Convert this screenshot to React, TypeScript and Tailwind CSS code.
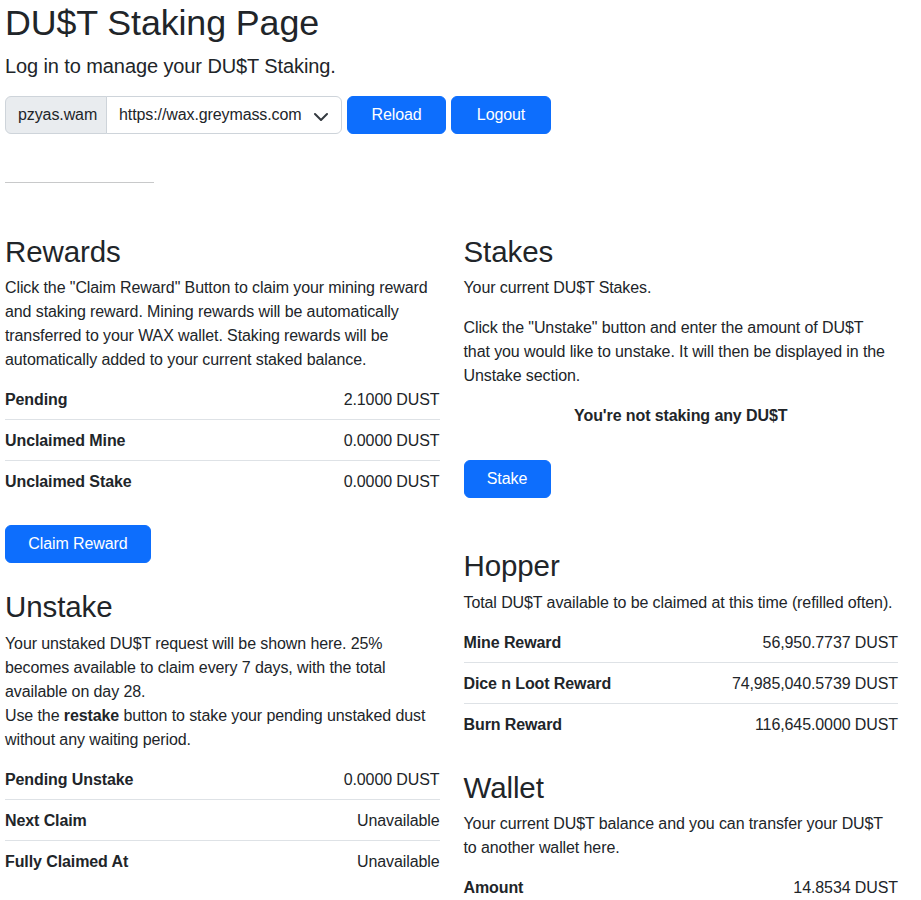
import React from 'react';

type Row = { label: string; value: string };

const REWARD_ROWS: Row[] = [
  { label: 'Pending', value: '2.1000 DUST' },
  { label: 'Unclaimed Mine', value: '0.0000 DUST' },
  { label: 'Unclaimed Stake', value: '0.0000 DUST' },
];

const UNSTAKE_ROWS: Row[] = [
  { label: 'Pending Unstake', value: '0.0000 DUST' },
  { label: 'Next Claim', value: 'Unavailable' },
  { label: 'Fully Claimed At', value: 'Unavailable' },
];

const HOPPER_ROWS: Row[] = [
  { label: 'Mine Reward', value: '56,950.7737 DUST' },
  { label: 'Dice n Loot Reward', value: '74,985,040.5739 DUST' },
  { label: 'Burn Reward', value: '116,645.0000 DUST' },
];

const WALLET_ROWS: Row[] = [{ label: 'Amount', value: '14.8534 DUST' }];

function Heading({ children, className = '' }: { children: React.ReactNode; className?: string }) {
  return (
    <h2 className={`pt-[2px] mb-[6px] text-[29.5px] leading-[35.4px] font-medium ${className}`}>
      {children}
    </h2>
  );
}

function InfoTable({ rows }: { rows: Row[] }) {
  return (
    <table className="w-full border-collapse">
      <tbody>
        {rows.map((row, i) => (
          <tr
            key={row.label}
            className={i < rows.length - 1 ? 'border-b border-[#dee2e6]' : ''}
          >
            <td className="pt-[9px] pb-[7px] px-0 font-bold text-left">{row.label}</td>
            <td className="pt-[9px] pb-[7px] px-0 text-right">{row.value}</td>
          </tr>
        ))}
      </tbody>
    </table>
  );
}

function BlueButton({ children, className = '' }: { children: React.ReactNode; className?: string }) {
  return (
    <button
      className={`h-[38px] px-0 py-[6px] border border-[#0d6efd] bg-[#0d6efd] text-white rounded-[6px] leading-6 ${className}`}
    >
      {children}
    </button>
  );
}

function Chevron() {
  return (
    <svg width="16" height="12" viewBox="0 0 16 12" className="shrink-0">
      <path
        d="m2 5 6 6 6-6"
        fill="none"
        stroke="#343a40"
        strokeWidth="2"
        strokeLinecap="round"
        strokeLinejoin="round"
      />
    </svg>
  );
}

export default function App() {
  return (
    <div className="min-h-screen bg-white text-[#212529] font-['Liberation_Sans',Arial,sans-serif] text-base leading-6 tracking-[-0.1px]">
      <div className="w-[893px] ml-[5px]">
        {/* Header */}
        <h1 className="pt-[2px] mb-[5px] text-[35.8px] leading-[43px] font-medium">DU$T Staking Page</h1>
        <p className="pt-[1px] mb-[15px] text-[20px] leading-[30px] font-light">
          Log in to manage your DU$T Staking.
        </p>

        {/* Login bar */}
        <div className="flex items-center">
          <div className="flex h-[38px]">
            <span className="w-[102px] flex items-center px-3 bg-[#e9ecef] border border-[#ced4da] rounded-l-[6px]">
              pzyas.wam
            </span>
            <div className="w-[236px] -ml-px flex items-center justify-between pl-3 pr-3 bg-white border border-[#ced4da] rounded-r-[6px]">
              <span>https://wax.greymass.com</span>
              <Chevron />
            </div>
          </div>
          <BlueButton className="ml-[5px] w-[99px]">Reload</BlueButton>
          <BlueButton className="ml-[5px] w-[100px]">Logout</BlueButton>
        </div>

        <hr className="mt-12 w-[149px] border-t border-[#c8c9ca]" />

        {/* Sections */}
        <div className="grid grid-cols-2 gap-x-6 mt-[49px] items-start">
          <div>
            <Heading>Rewards</Heading>
            <p className="pt-[1px] mb-[7px]">
              Click the "Claim Reward" Button to claim your mining reward and staking reward. Mining
              rewards will be automatically transferred to your WAX wallet. Staking rewards will be
              automatically added to your current staked balance.
            </p>
            <InfoTable rows={REWARD_ROWS} />
            <BlueButton className="mt-6 block w-[146px]">Claim Reward</BlueButton>

            <Heading className="mt-6">Unstake</Heading>
            <p className="pt-[1px] mb-[7px]">
              Your unstaked DU$T request will be shown here. 25% becomes available to claim every 7
              days, with the total available on day 28.
              <br />
              Use the <b className="font-bold">restake</b> button to stake your pending unstaked dust
              without any waiting period.
            </p>
            <InfoTable rows={UNSTAKE_ROWS} />
          </div>

          <div>
            <Heading>Stakes</Heading>
            <p className="pt-[1px] mb-[15px]">Your current DU$T Stakes.</p>
            <p className="pt-[1px] mb-[15px]">
              Click the "Unstake" button and enter the amount of DU$T
              <br />
              that you would like to unstake. It will then be displayed in the Unstake section.
            </p>
            <p className="pt-[1px] text-center font-bold">You're not staking any DU$T</p>
            <BlueButton className="mt-8 block w-[87px]">Stake</BlueButton>

            <Heading className="mt-12">Hopper</Heading>
            <p className="pt-[1px] mb-[7px]">Total DU$T available to be claimed at this time (refilled often).</p>
            <InfoTable rows={HOPPER_ROWS} />

            <Heading className="mt-6">Wallet</Heading>
            <p className="pt-[1px] mb-[7px]">
              Your current DU$T balance and you can transfer your DU$T to another wallet here.
            </p>
            <InfoTable rows={WALLET_ROWS} />
          </div>
        </div>
      </div>
    </div>
  );
}
